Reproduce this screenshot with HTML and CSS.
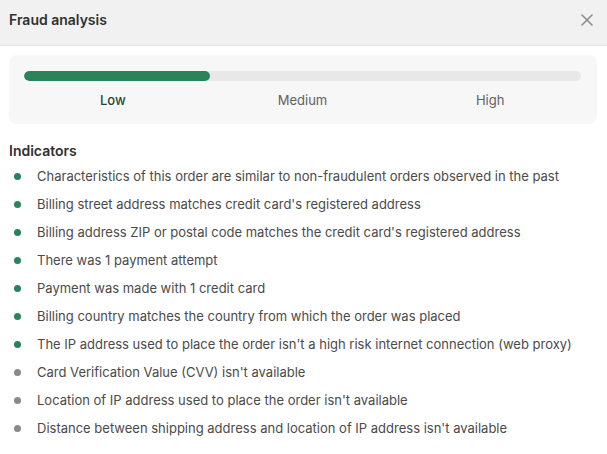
FILE: index.html
```html
<!DOCTYPE html>
<html lang="en">
<head>
    <meta charset="UTF-8">
    <meta name="viewport" content="width=device-width, initial-scale=1.0">
    <title>Fraud analysis</title>
    <link rel="stylesheet" href="styles.css">
</head>
<body>
    <div class="header">
        <h2>Fraud analysis</h2>
        <button class="close" aria-label="Close">
            <svg width="14" height="14" viewBox="0 0 14 14"><path d="M2 2L12 12M12 2L2 12" stroke="#8a8a8a" stroke-width="1.5" stroke-linecap="round"/></svg>
        </button>
    </div>

    <div class="content">
        <div class="risk">
            <div class="bar"><div class="fill" style="width: 33.4%"></div></div>
            <div class="levels">
                <span class="active">Low</span>
                <span>Medium</span>
                <span>High</span>
            </div>
        </div>

        <h3>Indicators</h3>
        <ul class="indicators">
            <li class="good">Characteristics of this order are similar to non-fraudulent orders observed in the past</li>
            <li class="good">Billing street address matches credit card's registered address</li>
            <li class="good">Billing address ZIP or postal code matches the credit card's registered address</li>
            <li class="good">There was 1 payment attempt</li>
            <li class="good">Payment was made with 1 credit card</li>
            <li class="good">Billing country matches the country from which the order was placed</li>
            <li class="good">The IP address used to place the order isn't a high risk internet connection (web proxy)</li>
            <li>Card Verification Value (CVV) isn't available</li>
            <li>Location of IP address used to place the order isn't available</li>
            <li>Distance between shipping address and location of IP address isn't available</li>
        </ul>
    </div>
</body>
</html>
```

FILE: styles.css
```css
body {
    margin: 0;
    font-family: Inter, "Noto Sans", sans-serif;
    background-color: #fff;
    color: #303030;
}

.header {
    height: 46px;
    display: flex;
    align-items: center;
    justify-content: space-between;
    padding: 0 13px 0 9px;
    background-color: #f1f1f1;
    border-bottom: 1px solid #e3e3e3;
    box-sizing: border-box;
}

.header h2 {
    margin: 0 0 6px;
    font-size: 14px;
    font-weight: 600;
    color: #303030;
}

.close {
    border: none;
    background: none;
    padding: 0;
    margin-bottom: 6px;
    display: flex;
    cursor: pointer;
}

.content {
    padding: 9px 10px 0 9px;
}

.risk {
    background-color: #f7f7f7;
    border-radius: 8px;
    padding: 16px 16px 0 15px;
    height: 69px;
    box-sizing: border-box;
}

.bar {
    height: 10px;
    background-color: #e8e8e8;
    border-radius: 5px;
    overflow: hidden;
}

.fill {
    height: 100%;
    background-color: #29845a;
    border-radius: 5px;
}

.levels {
    display: grid;
    grid-template-columns: 1fr 1fr 1fr;
    margin-top: 11px;
    font-size: 13px;
    color: #616161;
    text-align: center;
}

.levels span:last-child {
    margin-left: 4px;
}

.levels .active {
    color: #1e4a35;
    font-weight: 500;
    margin-right: 8px;
}

h3 {
    margin: 18px 0 0;
    font-size: 14px;
    font-weight: 600;
    color: #303030;
}

.indicators {
    list-style: none;
    margin: 3px 0 0;
    padding: 0;
}

.indicators li {
    display: flex;
    align-items: center;
    height: 28px;
    font-size: 13px;
    color: #4a4a4a;
}

.indicators li::before {
    content: "";
    width: 7px;
    height: 7px;
    border-radius: 50%;
    background-color: #8a8a8a;
    margin: 0 16px 0 5px;
    flex-shrink: 0;
}

.indicators li.good::before {
    background-color: #29845a;
}
```
